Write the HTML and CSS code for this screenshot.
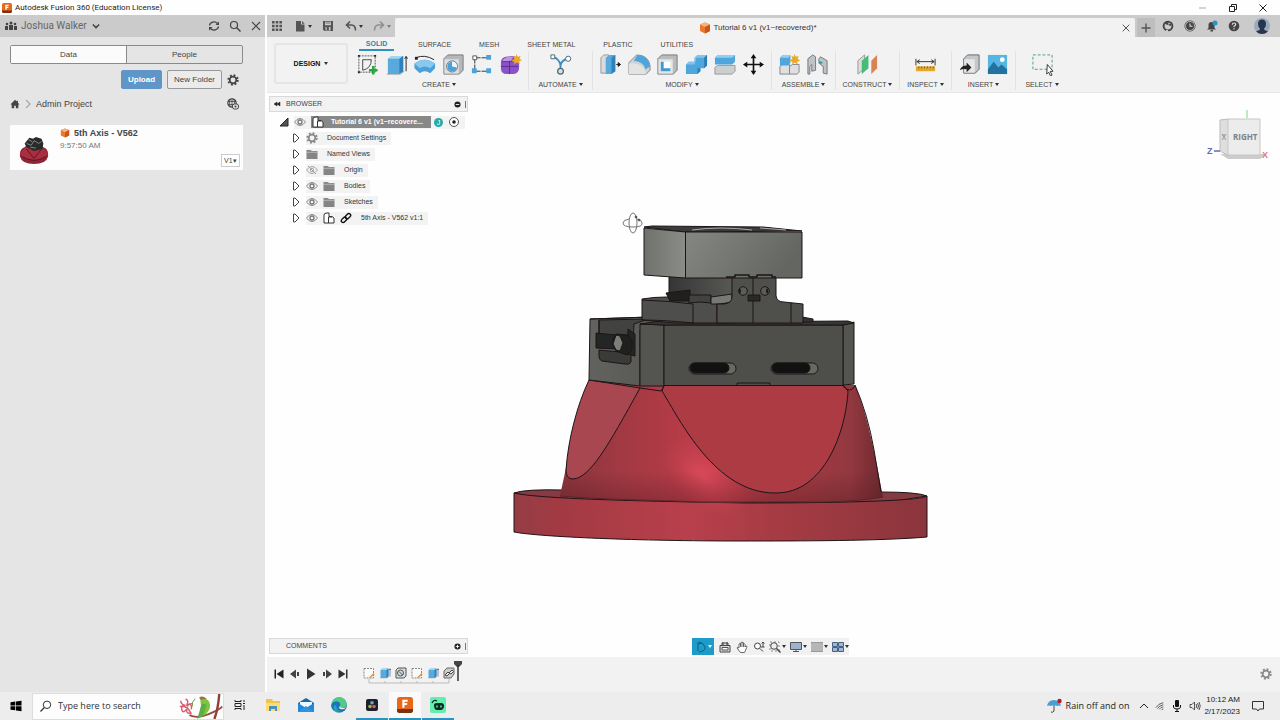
FILE: index.html
```html
<!DOCTYPE html>
<html lang="en">
<head>
<meta charset="utf-8">
<title>Autodesk Fusion 360 (Education License)</title>
<link rel="stylesheet" href="styles.css">
</head>
<body>
<svg class="sprite" aria-hidden="true">
  <defs>
    <linearGradient id="metalLeft" x1="0" x2="1"><stop offset="0" stop-color="#6f716c"/><stop offset="1" stop-color="#8b8d88"/></linearGradient>
    <linearGradient id="metalFront" x1="0" x2="1" y1="0" y2=".3"><stop offset="0" stop-color="#858882"/><stop offset="1" stop-color="#646662"/></linearGradient>
    <linearGradient id="darkLeft" x1="0" x2="1"><stop offset="0" stop-color="#62635f"/><stop offset="1" stop-color="#50514d"/></linearGradient>
    <linearGradient id="column" x1="0" x2="1"><stop offset="0" stop-color="#353535"/><stop offset="1" stop-color="#595a57"/></linearGradient>
    <linearGradient id="cone" x1="0" x2="1"><stop offset="0" stop-color="#8a343c"/><stop offset=".18" stop-color="#a03942"/><stop offset=".36" stop-color="#b33b47"/><stop offset=".47" stop-color="#c8414f"/><stop offset=".65" stop-color="#a83a43"/><stop offset=".9" stop-color="#93383f"/><stop offset="1" stop-color="#6e292f"/></linearGradient>
    <radialGradient id="shine"><stop offset="0" stop-color="#dd4b5c"/><stop offset="1" stop-color="#c8414f" stop-opacity="0"/></radialGradient>
    <linearGradient id="shade" x1="0" x2="0" y1="0" y2="1"><stop offset=".75" stop-color="#3c1216" stop-opacity="0"/><stop offset="1" stop-color="#3c1216" stop-opacity=".28"/></linearGradient>
    <linearGradient id="base" x1="0" x2="1"><stop offset="0" stop-color="#963c44"/><stop offset=".12" stop-color="#a33a43"/><stop offset=".42" stop-color="#b8404c"/><stop offset=".6" stop-color="#a93c44"/><stop offset="1" stop-color="#8a353c"/></linearGradient>
    <linearGradient id="edgeBlue" x1="0" x2="1"><stop offset="0" stop-color="#35c1b1"/><stop offset="1" stop-color="#0c59a4"/></linearGradient>
  </defs>

  <symbol id="i-fusion" viewBox="0 0 12 12"><rect width="12" height="12" rx="2" fill="#e8681a"/><path d="M0 9h12v1a2 2 0 0 1-2 2H2a2 2 0 0 1-2-2z" fill="#7c3210"/><path d="M4 8V2h4v1.500H5.600V4.500H7.600V6H5.600V8z" fill="#fff"/></symbol>
  <symbol id="i-people" viewBox="0 0 12 12"><g fill="#444"><circle cx="2" cy="4" r="1.300"/><circle cx="6" cy="3" r="1.500"/><circle cx="10" cy="4" r="1.300"/><path d="M0 6h3v4H0zM4 5h4v5H4zM9 6h3v4H9z"/></g></symbol>
  <symbol id="i-chevron" viewBox="0 0 8 8"><path d="M1.500 2.800 4 5.300 6.500 2.800" fill="none" stroke="#444" stroke-width="1.200"/></symbol>
  <symbol id="i-refresh" viewBox="0 0 12 12"><path d="M1.500 5.500A4.500 4 0 0 1 9.500 3.500M10.500 6.500A4.500 4 0 0 1 2.500 8.500" fill="none" stroke="#444" stroke-width="1.300"/><path d="M11 1.500v3.500H7.500zM1 10.500V7h3.500z" fill="#444"/></symbol>
  <symbol id="i-search" viewBox="0 0 12 12"><circle cx="5" cy="5" r="3.500" fill="none" stroke="#444" stroke-width="1.200"/><path d="m7.500 7.500 4 4" stroke="#444" stroke-width="1.400"/></symbol>
  <symbol id="i-find" viewBox="0 0 12 12"><circle cx="7" cy="4.800" r="3.700" fill="none" stroke="#333"/><path d="m4.300 7.500-3.800 4" stroke="#333" stroke-width="1.200"/></symbol>
  <symbol id="i-close" viewBox="0 0 12 12"><path d="m2 2 8 8M10 2l-8 8" stroke="#444" stroke-width="1.100"/></symbol>
  <symbol id="i-gear" viewBox="0 0 12 12"><circle cx="6" cy="6" r="4.800" fill="none" stroke="currentColor" stroke-width="1.800" stroke-dasharray="1.900 1.870"/><circle cx="6" cy="6" r="3.300" fill="none" stroke="currentColor" stroke-width="1.700"/></symbol>
  <symbol id="i-home" viewBox="0 0 12 12"><path d="M6 1 .5 6.500H2V11h3V8h2v3h3V6.500h1.500L9.500 4.500V2H8v1z" fill="#444"/></symbol>
  <symbol id="i-globe" viewBox="0 0 12 12"><circle cx="5" cy="5" r="4.200" fill="none" stroke="#444" stroke-width="1.200"/><path d="M1 3.500h8M1 6.500h8M5 1v8M3 1.500q-1 3.500 0 7M7 1.500q1 3.500 0 7" stroke="#444" stroke-width=".8" fill="none"/><rect x="5.500" y="6" width="6" height="5" rx="2" fill="#e5e5e5" stroke="#444"/><circle cx="8.500" cy="8.500" r="1" fill="#444"/></symbol>
  <symbol id="i-cube" viewBox="0 0 12 12"><path d="m6 .5 5 2V9l-5 2.500L1 9V2.500z" fill="#e77a2c"/><path d="m6 .5 5 2L6 5 1 2.500z" fill="#f7b27b"/><path d="m6 5 5-2.500V9l-5 2.500z" fill="#c9561b"/></symbol>
  <symbol id="i-thumb" viewBox="0 0 32 32"><path d="M1 20q0-5 5-7l4-4h12l4 4q5 2 5 7v3q-2 8-15 8T1 23z" fill="#8f2535"/><path d="M1 20q5 7 15 7t15-7l-6-7H7z" fill="#a82e40"/><path d="m8 15 8 10 8-10M3 23q13 8 26 0" fill="none" stroke="#541520"/><path d="m6 9 5-6 4 1 3-2 6 2 2 5-1 6-9 2-8-4z" fill="#292b2a"/><path d="m8 9 5 2 3-5 5 3 3-2M10 5l4 2m-2 6 6 1" fill="none" stroke="#878987"/></symbol>

  <symbol id="i-grid" viewBox="0 0 12 12"><path d="M1 1h2.600v2.600H1zM4.700 1h2.600v2.600H4.700zM8.400 1H11v2.600H8.400zM1 4.700h2.600v2.600H1zM4.700 4.700h2.600v2.600H4.700zM8.400 4.700H11v2.600H8.400zM1 8.400h2.600V11H1zM4.700 8.400h2.600V11H4.700zM8.400 8.400H11V11H8.400z" fill="#555"/></symbol>
  <symbol id="i-file" viewBox="0 0 12 12"><path d="M2 1h5v3.500h3.500V11.500H2z" fill="#555"/><path d="M8 1v2.700h2.700z" fill="#555"/></symbol>
  <symbol id="i-save" viewBox="0 0 12 12"><path d="M1 1h10v10H2.500L1 9.500z" fill="#555"/><path d="M3 1.800h6v3.400H3zM3.500 7h5v3.500h-5z" fill="#cbcbcb"/><path d="M3.500 3h5M5 7h1.500v3H5z" stroke="#555" stroke-width=".7" fill="#555"/></symbol>
  <symbol id="i-undo" viewBox="0 0 12 12"><path d="M2 5h4.500Q10.500 5 10.500 10.500M5 1.500 1.500 5 5 8.500" fill="none" stroke="currentColor" stroke-width="1.600"/></symbol>
  <symbol id="i-redo" viewBox="0 0 12 12"><path d="M10 5H5.500Q1.500 5 1.500 10.500M7 1.500 10.500 5 7 8.500" fill="none" stroke="currentColor" stroke-width="1.600"/></symbol>
  <symbol id="i-plus" viewBox="0 0 12 12"><path d="M6 1.500v9M1.500 6h9" stroke="#555" stroke-width="1.400"/></symbol>
  <symbol id="i-ext" viewBox="0 0 12 12"><circle cx="6" cy="6" r="4.400" fill="none" stroke="#444" stroke-width="1.900"/><path d="M4 1h3l-1 4-3-1zM6 5l3-2v3z" fill="#444"/><path d="M5 10v2" stroke="#cbcbcb" stroke-width="2"/></symbol>
  <symbol id="i-clock" viewBox="0 0 12 12"><circle cx="6" cy="6" r="5.200" fill="none" stroke="#555" stroke-width=".8"/><circle cx="6" cy="6" r="4" fill="#444"/><path d="M6 3.500V6.300h2.500" fill="none" stroke="#ddd" stroke-width="1.100"/></symbol>
  <symbol id="i-bell" viewBox="0 0 12 12"><path d="M1 9.500 2.500 8V5Q2.500 2 5.500 2T8.500 5V8L10 9.500zM4.500 10h2.500v1.500H4.500z" fill="#444"/><circle cx="9" cy="3" r="2.500" fill="#1e96c8"/></symbol>
  <symbol id="i-help" viewBox="0 0 12 12"><circle cx="6" cy="6" r="5.300" fill="#444"/><path d="M4.300 4.700Q4.300 3 6 3t1.700 1.600Q7.700 5.600 6 6.300V7.200M6 8.200v1.200" fill="none" stroke="#ddd" stroke-width="1.200"/></symbol>
  <symbol id="i-avatar" viewBox="0 0 16 16"><circle cx="8" cy="8" r="8" fill="#9ba9bf"/><path d="M8 1.500q4 0 4 4.500 0 3-2 4.500l.5 1.500 3.500 1.500Q11 16 8 16t-6-2.500L5.500 12 6 10.500Q4 9 4 6q0-4.500 4-4.500z" fill="#27364e"/></symbol>

  <symbol id="t-sketch" viewBox="0 0 24 24"><path d="M3 3h17v17H3z" fill="none" stroke="#555" stroke-dasharray="2 1"/><path d="M7 18V7l4 0M7 18q9-2 9-11h-5" fill="none" stroke="#444" stroke-width="1"/><path d="M2 2h2v2H2zM19 2h2v2h-2zM2 19h2v2H2z" fill="#222"/><path d="M18 13.500v9M13.500 18h9" stroke="#26a83e" stroke-width="2.600"/></symbol>
  <symbol id="t-extrude" viewBox="0 0 24 24"><path d="m3 6 4-3h12v16l-4 3H3z" fill="#58a9dc"/><path d="m3 6 4-3h12l-4 3z" fill="#a5d5f2"/><path d="m15 6 4-3v16l-4 3z" fill="#2e82bb"/><path d="M22 4v15M20.500 6 22 3.500 23.500 6" fill="none" stroke="#222"/><path d="M2 22h14l4-3" fill="none" stroke="#999"/></symbol>
  <symbol id="t-revolve" viewBox="0 0 24 24"><path d="M1.500 11Q12 3 23 11v5l-5 5q-6-4-11 0l-5.500-5z" fill="#4ba1d7"/><path d="M1.500 11Q12 3 23 11l-5 5q-6-4-11 0z" fill="#8bc8ed"/><path d="M3 5q9-4 19 2" fill="none" stroke="#222"/><path d="M2 4h3v3H2z" fill="#222"/></symbol>
  <symbol id="t-hole" viewBox="0 0 24 24"><path d="m2 6 4-4h16v16l-4 4H2z" fill="#b5b8bb" stroke="#76797c"/><path d="M2.500 6.500h15v15h-15z" fill="#dddfe1"/><circle cx="10.500" cy="14" r="5.800" fill="#eef6fb" stroke="#777"/><path d="M10.500 9v5l5 1a5 5 0 1 1-5-6z" fill="#4ba1d7"/></symbol>
  <symbol id="t-pattern" viewBox="0 0 24 24"><path d="M5 5h14M5 19h14M5 5v14" stroke="#333" stroke-dasharray="6 1"/><path d="M3 3h4v4H3z" fill="#fff" stroke="#555"/><path d="M17 2h5v5h-5zM2 16h5v5H2zM17 16h5v5h-5z" fill="#4aa3da"/></symbol>
  <symbol id="t-form" viewBox="0 0 24 24"><path d="M2 10q0-5 5-6l7-1q7 1 7 6v6q0 6-6 7H8q-6 0-6-6z" fill="#8a52c4"/><path d="M3 9q2-4 7-5h5l-3 5z" fill="#bd95e3"/><path d="M2 14h18M11 8v14M3 9h10l4-5" stroke="#5c2d94" fill="none"/><path d="m18 1 1.500 3 3-1-1 3 2.500 1.500-3 1 .5 3-3-1.500-2.500 2v-3l-3-1 3-2-1-3 2.500 1z" fill="#eca927"/></symbol>
  <symbol id="t-auto" viewBox="0 0 24 24"><path d="M4 4q7 2 8 9m8-7q-7 1-8 7v5" fill="none" stroke="#3e8dbd" stroke-width="2"/><path d="M2 2h4v4H2z" fill="#fff" stroke="#4a6878"/><circle cx="20" cy="6" r="2.700" fill="#fff" stroke="#4a6878"/><circle cx="12" cy="19" r="3" fill="#ddd" stroke="#4a6878" stroke-width="1.300"/></symbol>
  <symbol id="t-press" viewBox="0 0 24 24"><path d="m2 5 3-3h5v19H2z" fill="#d9dbdc" stroke="#999"/><path d="m7 5 4-3h6v17l-4 3H7z" fill="#58aadd"/><path d="m13 5 4-3v17l-4 3z" fill="#2e83bd"/><path d="M18 12h4m-2-2 2.500 2-2.500 2z" fill="#222" stroke="#222"/></symbol>
  <symbol id="t-fillet" viewBox="0 0 24 24"><path d="M1 10 9 2q12 0 14 11v5l-4 4H1z" fill="#cfd1d3" stroke="#888"/><path d="M1 11q15-2 18 11H1z" fill="#e2e3e5"/><path d="M10 2q12 1 13 12l-5 3Q17 9 6 8z" fill="#4da5db"/></symbol>
  <symbol id="t-shell" viewBox="0 0 24 24"><path d="m2 6 4-4h16v16l-4 4H2z" fill="#b9bcbe" stroke="#777"/><path d="M2.500 6.500h15v15h-15z" fill="#e3e5e6"/><path d="M5 9h10v10H5z" fill="#fff"/><path d="M5 9h3v7h7v3H5z" fill="#3f9ad2"/></symbol>
  <symbol id="t-combine" viewBox="0 0 24 24"><path d="m1 12 3-3h6V5l3-3h10v11l-3 3h-4v3l-3 3H1z" fill="#4fa6dc"/><path d="m1 12 3-3h6V5l3-3h10l-3 3h-8l-2 7z" fill="#82c4ed"/><path d="m20 5 3-3v11l-3 3zM13 16h3v3l-3 3z" fill="#2b7eb7"/></symbol>
  <symbol id="t-split" viewBox="0 0 24 24"><path d="m2 5 3-3h18v7l-3 3H2z" fill="#4fa6dc"/><path d="m2 5 3-3h18l-3 3z" fill="#94cff2"/><path d="m2 15 3-2h18v6l-3 3H2z" fill="#cccfd1" stroke="#999"/></symbol>
  <symbol id="t-move" viewBox="0 0 24 24"><path d="M12 3v18M3 12h18" stroke="#111" stroke-width="1.700"/><path d="m12 1 3 4.500H9zM12 23l3-4.500H9zM1 12l4.500-3v6zM23 12l-4.500-3v6z" fill="#111"/></symbol>
  <symbol id="t-newcomp" viewBox="0 0 24 24"><path d="m2 14 3-2h7v10H2zM12 14l3-2h7v8l-2 2h-8z" fill="#dddfe0" stroke="#888"/><path d="m2 5 3-3h8v8l-2 3H2z" fill="#4fa6dc"/><path d="m2 5 3-3h8l-2 3z" fill="#94cff2"/><path d="m17 1 1.500 3 3-1-1 3L23 8l-3 1 .5 3-3-2-2.500 2v-3l-3-1 3-2-1-3 2.500 1z" fill="#e6a928"/></symbol>
  <symbol id="t-joint" viewBox="0 0 24 24"><path d="m2 6 5-4 3 2v14l-4 1v-7l-2 2v8H2zM13 7l2-3 7 4v14l-4-1v-7l-3-2z" fill="#bfc3c6" stroke="#74797d"/><path d="M13 10h4" stroke="#2798a7" stroke-width="2"/></symbol>
  <symbol id="t-plane" viewBox="0 0 24 24"><path d="M2 8 9 2v14l-7 6z" fill="#ddd" stroke="#999"/><path d="m6 8 7-6v14l-7 6z" fill="#49bb78"/><path d="m16 8 6-6v14l-6 6z" fill="#d98352"/></symbol>
  <symbol id="t-measure" viewBox="0 0 24 24"><path d="M2 6v7M22 6v7M3 9h18M6 7 3 9l3 2M18 7l3 2-3 2" stroke="#333" fill="none"/><path d="M2 14h20v5H2z" fill="#e2a72b"/><path d="M5 14v2m3-2v2m3-2v2m3-2v2m3-2v2m3-2v2" stroke="#82570a"/></symbol>
  <symbol id="t-insert" viewBox="0 0 24 24"><path d="m6 6 4-4h12v15l-4 4H6z" fill="#c5c8ca" stroke="#666"/><path d="M6.500 6.500h11v14h-11z" fill="#e5e7e8"/><path d="M2 18q1-5 7-5v-3l5 5-5 5v-3q-4-1-7 1z" fill="#222"/></symbol>
  <symbol id="t-image" viewBox="0 0 24 24"><path d="M2 2h20v20H2z" fill="#55b5e3"/><path d="M2 17 8 9l5 6 3-3 6 5v5H2z" fill="#23719e"/><circle cx="17" cy="7" r="2.500" fill="#fff"/></symbol>
  <symbol id="t-select" viewBox="0 0 24 24"><path d="M2 2h20v15H2z" fill="none" stroke="#4e9c88" stroke-dasharray="3 2"/><path d="m17 12 6 7-3 .3 2 3.700-1.800.8-1.800-3.800-2 2z" fill="#fff" stroke="#333"/></symbol>

  <symbol id="b-eye" viewBox="0 0 12 12"><path d="M.5 6Q3 2.500 6 2.500T11.500 6Q9 9.500 6 9.500T.5 6z" fill="none" stroke="#888"/><circle cx="6" cy="6" r="2" fill="none" stroke="#777" stroke-width="1.300"/></symbol>
  <symbol id="b-hidden" viewBox="0 0 12 12"><path d="M.5 6Q3 2.500 6 2.500T11.500 6Q9 9.500 6 9.500T.5 6zM2 2l8 8" fill="none" stroke="#a2a2a2"/><circle cx="6" cy="6" r="1.700" fill="none" stroke="#aaa"/></symbol>
  <symbol id="b-folder" viewBox="0 0 12 12"><path d="M.5 2h4L6 3h5.500v8H.5z" fill="#858585"/><path d="M0 4.300h12" stroke="#ccc" stroke-width=".7"/></symbol>
  <symbol id="b-comp" viewBox="0 0 12 12"><path d="M1 3q0-2 3-2h2v3.500h3l2 1.500v5H1z" fill="#fff" stroke="#333"/><path d="M5.500 11V5H9" fill="none" stroke="#333"/></symbol>
  <symbol id="b-link" viewBox="0 0 12 12"><g fill="none" stroke="#111" stroke-width="1.400"><rect x="1" y="6" width="6" height="3.600" rx="1.800" transform="rotate(-45 4 7.800)"/><rect x="5" y="2.400" width="6" height="3.600" rx="1.800" transform="rotate(-45 8 4.200)"/></g></symbol>
  <symbol id="b-tri" viewBox="0 0 8 10"><path d="M1.500 1v8h1.500L7 5 3 1z" fill="#fff" stroke="#444"/></symbol>
  <symbol id="b-open" viewBox="0 0 10 10"><path d="M1 9h8V1z" fill="#555" stroke="#222"/></symbol>
  <symbol id="b-radio" viewBox="0 0 12 12"><circle cx="6" cy="6" r="4.500" fill="#fff" stroke="#555"/><circle cx="6" cy="6" r="1.800" fill="#222"/></symbol>
  <symbol id="b-minus" viewBox="0 0 8 8"><circle cx="4" cy="4" r="3.500" fill="#222"/><path d="M2 4h4" stroke="#fff"/></symbol>
  <symbol id="b-plus" viewBox="0 0 8 8"><circle cx="4" cy="4" r="3.500" fill="#222"/><path d="M2 4h4M4 2v4" stroke="#fff"/></symbol>
  <symbol id="b-back" viewBox="0 0 10 8"><path d="M5 2v4L2 4zM8 2v4L5 4z" fill="#222" stroke="#222" stroke-width=".5"/></symbol>

  <symbol id="n-orbit" viewBox="0 0 12 12"><path d="M4 1q5 1 6 5t-6 5M3 3l4-1M3 1v9" fill="none" stroke="#135e84"/></symbol>
  <symbol id="n-look" viewBox="0 0 12 12"><path d="M1 4.500h10V11H1zM3 4.500V2h6v2.500M4 1v3M8 1v3" fill="#ddd" stroke="#444"/><path d="M3 6.500h6v2.500H3z" fill="#fff" stroke="#555"/></symbol>
  <symbol id="n-pan" viewBox="0 0 12 12"><path d="M3 7V3q1-1 1.500 0V2Q5.500.5 6 2V1.500q1-1 1.500.5v1q1-1 1.500.5V6l1-1q1.500 0 .7 1.500L9 10.500 8.500 11.500H4.500L1 7q0-1.500 2 0zM4.500 3v3M6 2v4M7.500 3v3" fill="#fff" stroke="#444" stroke-width=".8"/></symbol>
  <symbol id="n-zoom" viewBox="0 0 12 12"><circle cx="4.500" cy="5" r="3" fill="#fff" stroke="#444"/><path d="m7 7.500 3 3M10 1v5M8.500 2.500 10 1l1.500 1.500M8 6h3.500" fill="none" stroke="#444"/></symbol>
  <symbol id="n-fit" viewBox="0 0 12 12"><path d="M1 1h9v9H1z" fill="none" stroke="#888" stroke-dasharray="2"/><circle cx="5" cy="5" r="3.300" fill="#eee" stroke="#444"/><path d="m7.500 7.500 4 4" stroke="#444" stroke-width="1.500"/></symbol>
  <symbol id="n-display" viewBox="0 0 12 12"><path d="M.5 1.500h11v7H.5z" fill="#9cb2cf" stroke="#555"/><path d="M3 10.500h6M6 8v3" stroke="#555"/></symbol>
  <symbol id="n-grid" viewBox="0 0 12 12"><path d="M0 1h12v10H0z" fill="#999"/><path d="M0 3h12M0 5h12M0 7h12M0 9h12" stroke="#eee" stroke-width=".7"/></symbol>
  <symbol id="n-views" viewBox="0 0 12 12"><path d="M.5 1.500h5v4h-5zM6.500 1.500h5v4h-5zM.5 6.500h5v4h-5zM6.500 6.500h5v4h-5z" fill="#9eb9d8" stroke="#47617f"/></symbol>

  <symbol id="p-first" viewBox="0 0 12 12"><path d="M1.500 1.500H3v9H1.500zM10.500 1.500v9L3.500 6z" fill="#222"/></symbol>
  <symbol id="p-prev" viewBox="0 0 12 12"><path d="M7 1.500v9L1 6zM8 4h2v4H8z" fill="#444"/></symbol>
  <symbol id="p-play" viewBox="0 0 12 12"><path d="M2 .5v11L10.500 6z" fill="#333"/></symbol>
  <symbol id="p-next" viewBox="0 0 12 12"><path d="M5 1.500v9L11 6zM2 4h2v4H2z" fill="#444"/></symbol>
  <symbol id="p-last" viewBox="0 0 12 12"><path d="M10.500 1.500H9v9h1.500zM1.500 1.500v9L8.500 6z" fill="#333"/></symbol>
  <symbol id="h-sketch" viewBox="0 0 12 12"><path d="M1 1.500h9.500V11H1z" fill="#fafafa" stroke="#888" stroke-dasharray="2 1"/><path d="M6 10.500 10.500 6l1 1.200L7.500 11z" fill="#dc9444"/></symbol>
  <symbol id="h-hole" viewBox="0 0 12 12"><path d="m1 3 2-2h8v8l-2 2H1z" fill="#ddd" stroke="#555"/><circle cx="5.500" cy="6" r="3" fill="#cfdae3" stroke="#555"/><path d="M4 4.500 7.500 8" stroke="#456"/></symbol>
  <symbol id="h-link" viewBox="0 0 12 12"><path d="m1 4 3-3h7v6l-3 4H1z" fill="#ccc" stroke="#666"/><path d="m2 8 3-3 1.500 1.500L4 9zm4-2 3-3 1.500 1.500L8 7z" fill="#eee" stroke="#444"/></symbol>

  <symbol id="w-start" viewBox="0 0 12 12"><path d="m.5 2.300 4.800-.7v4H.5zM6 1.500l5.500-.8v4.900H6zM.5 6.300h4.800v4L.5 9.700zM6 6.300h5.500v5L6 10.500z" fill="#000"/></symbol>
  <symbol id="w-bird" viewBox="0 0 46 26"><path d="M12 22q8 4 20-1t14-8" fill="none" stroke="#9c4a3d" stroke-width="2"/><path d="M43 0q-1 15-5 26" stroke="#8d4138" stroke-width="2.500" fill="none"/><path d="M3 7q0 4 5 5-5-1-4 4t5 0q0 6 5 3M8 5q4 2 1 7 6-4 5 4M2 13q8-2 12 8" fill="none" stroke="#dc5a72" stroke-width="1.500"/><path d="M18 5q-4 3-3 8M15 10q-4-1-5 4" stroke="#6f923a" fill="none"/><path d="M23 4q8 0 10 5 2 6-4 12l-7 4 2-13z" fill="#7dc53a"/><path d="m25 10 5 1-4 12-6 3z" fill="#5aae46"/><path d="M22 4q3-3 8 1l-6 1z" fill="#9d7340"/></symbol>
  <symbol id="w-task" viewBox="0 0 12 12"><path d="M1 4.500h6v3H1zM1 1v1.500h6V1M1 11V9.500h6V11M10 1v2M10 6v5M9 4.500h2" fill="none" stroke="#222"/></symbol>
  <symbol id="w-explorer" viewBox="0 0 16 16"><path d="M1 2h6l1 2h7v10H1z" fill="#f2c44d"/><path d="M1 6h14v8H1z" fill="#fbdc77"/><path d="M4 9h8v5h-2v-2H6v2H4z" fill="#4a90c7"/></symbol>
  <symbol id="w-mail" viewBox="0 0 16 16"><path d="m0 6 8-5 8 5v9H0z" fill="#1469ae"/><path d="M2 5h12v6H2z" fill="#eef7fd"/><path d="m0 6 8 5 8-5v9H0z" fill="#2387d6"/><path d="m0 15 8-6 8 6z" fill="#2f93dd"/></symbol>
  <symbol id="w-edge" viewBox="0 0 16 16"><circle cx="8" cy="8" r="7.800" fill="url(#edgeBlue)"/><path d="M1 6q2-6 8-5.800 6 .8 6.800 7Q16 10 12 11q-4 0-3-2 1-4-3-4.500Q3 4 1 6z" fill="#54ca86"/><path d="M.3 8Q2 4 6 4.500q4 .5 3 4.500-1 2 3 2 2 0 3.500-1-.5 3-4 4Q5 13 5 8 1 8 4 14 0 12 .3 8z" fill="#1873c3"/><path d="M9 9q0 2 3 2 2 0 3.500-1-2 3-6 2-2.500-1-.5-3z" fill="#eee"/></symbol>
  <symbol id="w-davinci" viewBox="0 0 12 12"><rect width="12" height="12" rx="2" fill="#1d2129"/><circle cx="6" cy="3.800" r="1.800" fill="#65a9d4"/><circle cx="4" cy="7.500" r="1.800" fill="#9ab54c"/><circle cx="8" cy="7.500" r="1.800" fill="#d35b53"/></symbol>
  <symbol id="w-green" viewBox="0 0 16 16"><rect width="16" height="16" rx="2" fill="#63edaf"/><path d="M4 8q0-2 3-2h4q3 0 3 3t-3 4H7q-3 0-3-5z" fill="#092b21"/><path d="M2 6q2-4 5-2" fill="none" stroke="#092b21" stroke-width="1.300"/><path d="M7 8.500v2M11 8.500v2" stroke="#63edaf" stroke-width="1.500"/></symbol>
  <symbol id="w-rain" viewBox="0 0 16 16"><path d="M1 8q1-6 7-6t7 6q-2-1-3.500 0Q9.500 7 8 8 6 7 4.500 8 3 7 1 8z" fill="#479fd4"/><path d="M8 8v5q-1 2-3 1" fill="none" stroke="#444"/><circle cx="13.500" cy="3" r="2.200" fill="#b71928"/></symbol>
  <symbol id="w-up" viewBox="0 0 10 10"><path d="m1 7 4-4 4 4" fill="none" stroke="#222"/></symbol>
  <symbol id="w-wifi" viewBox="0 0 12 12"><path d="M1 8Q4 3 10 2M3 9Q5 5.500 10 4.500M5 10q1.500-2.500 5-3M7.500 11q.5-1 2.500-1.500" fill="none" stroke="#444"/></symbol>
  <symbol id="w-mic" viewBox="0 0 12 12"><rect x="4" y="0" width="4" height="7" rx="1" fill="#111"/><path d="M2.500 5v2q0 2 3.500 2t3.500-2V5M6 9v2.500M4 11.500h4" fill="none" stroke="#111"/></symbol>
  <symbol id="w-sound" viewBox="0 0 12 12"><path d="M1 4.500h2L5.500 2v8L3 7.500H1zM7 4q1.500 2 0 4M8.500 3q2 3 0 6M10 2q2.500 4 0 8" fill="none" stroke="#444" stroke-width=".9"/></symbol>
  <symbol id="w-note" viewBox="0 0 12 12"><path d="M.5 1.500h11v7.500H7.500L6 11 4.500 9h-4z" fill="none" stroke="#333"/></symbol>
</svg>

<header class="titlebar">
  <svg class="icon icon-s"><use href="#i-fusion"/></svg>
  <h1 class="titlebar-name">Autodesk Fusion 360 (Education License)</h1>
  <div class="window-controls">
    <button aria-label="Minimize"><svg viewBox="0 0 10 10"><path d="M1 5h7" stroke="#aaa"/></svg></button>
    <button aria-label="Restore"><svg viewBox="0 0 10 10"><path d="M1.500 3.500h5v5h-5zM3.500 3V1.500h5v5H7" fill="none" stroke="#222"/></svg></button>
    <button aria-label="Close"><svg viewBox="0 0 10 10"><path d="m1.500 1.500 7 7M8.500 1.500l-7 7" stroke="#222"/></svg></button>
  </div>
</header>

<div class="app">
  <aside class="data-panel">
    <div class="panel-head">
      <svg class="icon icon-m"><use href="#i-people"/></svg>
      <button class="team">Joshua Walker <svg class="icon icon-s"><use href="#i-chevron"/></svg></button>
      <div class="panel-tools">
        <button aria-label="Refresh"><svg class="icon icon-m"><use href="#i-refresh"/></svg></button>
        <button aria-label="Search"><svg class="icon icon-m"><use href="#i-search"/></svg></button>
        <button aria-label="Close panel"><svg class="icon icon-m"><use href="#i-close"/></svg></button>
      </div>
    </div>
    <div class="panel-body">
      <div class="segmented"><button class="selected">Data</button><button>People</button></div>
      <div class="panel-actions">
        <button class="btn btn-primary">Upload</button><button class="btn">New Folder</button>
        <button aria-label="Settings"><svg class="icon icon-m"><use href="#i-gear"/></svg></button>
      </div>
      <nav class="crumbs">
        <a href="#" aria-label="Home"><svg class="icon icon-s"><use href="#i-home"/></svg></a>
        <svg class="crumb-arrow" viewBox="0 0 6 10"><path d="m1 1 4 4-4 4" fill="none" stroke="#aaa" stroke-width="1.300"/></svg>
        <a href="#">Admin Project</a>
        <button class="push" aria-label="Open on the web"><svg class="icon icon-m"><use href="#i-globe"/></svg></button>
      </nav>
      <article class="file-card">
        <svg class="thumb"><use href="#i-thumb"/></svg>
        <div class="file-info">
          <h2><svg class="icon icon-s"><use href="#i-cube"/></svg>5th Axis - V562</h2>
          <p>9:57:50 AM</p>
        </div>
        <select class="version" aria-label="Version"><option>V1▾</option></select>
      </article>
    </div>
  </aside>

  <main class="workspace">
    <div class="tab-row">
      <div class="quick">
        <button aria-label="Show data panel"><svg class="icon icon-m"><use href="#i-grid"/></svg></button>
        <button aria-label="File"><svg class="icon icon-m"><use href="#i-file"/></svg><i class="caret"></i></button>
        <button aria-label="Save"><svg class="icon icon-m"><use href="#i-save"/></svg></button>
        <button aria-label="Undo"><svg class="icon icon-m"><use href="#i-undo"/></svg><i class="caret"></i></button>
        <button class="faded" aria-label="Redo"><svg class="icon icon-m"><use href="#i-redo"/></svg><i class="caret"></i></button>
      </div>
      <div class="doc-tab">
        <span class="doc-name"><svg class="icon icon-m"><use href="#i-cube"/></svg>Tutorial 6 v1 (v1~recovered)*</span>
        <button aria-label="Close document"><svg class="icon icon-s"><use href="#i-close"/></svg></button>
      </div>
      <button class="new-tab" aria-label="New design"><svg class="icon icon-m"><use href="#i-plus"/></svg></button>
      <div class="status-tools">
        <button aria-label="Extensions"><svg class="icon icon-m"><use href="#i-ext"/></svg></button>
        <button aria-label="Job status"><svg class="icon icon-m"><use href="#i-clock"/></svg></button>
        <button aria-label="Notifications"><svg class="icon icon-m"><use href="#i-bell"/></svg></button>
        <button aria-label="Help"><svg class="icon icon-m"><use href="#i-help"/></svg></button>
        <button class="account" aria-label="Account"><svg class="icon icon-l"><use href="#i-avatar"/></svg></button>
      </div>
    </div>

    <div class="ribbon">
      <button class="design">DESIGN <i class="caret"></i></button>
      <div class="ribbon-main">
        <div class="ribbon-tabs">
          <button class="active">SOLID</button><button>SURFACE</button><button>MESH</button><button>SHEET METAL</button><button>PLASTIC</button><button>UTILITIES</button>
        </div>
        <div class="groups">
          <section class="group six">
            <div class="tools">
              <button aria-label="Create Sketch"><svg><use href="#t-sketch"/></svg></button><button aria-label="Extrude"><svg><use href="#t-extrude"/></svg></button><button aria-label="Revolve"><svg><use href="#t-revolve"/></svg></button><button aria-label="Hole"><svg><use href="#t-hole"/></svg></button><button aria-label="Pattern"><svg><use href="#t-pattern"/></svg></button><button aria-label="Create Form"><svg><use href="#t-form"/></svg></button>
            </div><button class="group-name">CREATE <i class="caret"></i></button>
          </section>
          <section class="group two">
            <div class="tools single"><button aria-label="Automate"><svg><use href="#t-auto"/></svg></button></div><button class="group-name">AUTOMATE <i class="caret"></i></button>
          </section>
          <section class="group six">
            <div class="tools">
              <button aria-label="Press Pull"><svg><use href="#t-press"/></svg></button><button aria-label="Fillet"><svg><use href="#t-fillet"/></svg></button><button aria-label="Shell"><svg><use href="#t-shell"/></svg></button><button aria-label="Combine"><svg><use href="#t-combine"/></svg></button><button aria-label="Split Body"><svg><use href="#t-split"/></svg></button><button aria-label="Move"><svg><use href="#t-move"/></svg></button>
            </div><button class="group-name">MODIFY <i class="caret"></i></button>
          </section>
          <section class="group two">
            <div class="tools"><button aria-label="New Component"><svg><use href="#t-newcomp"/></svg></button><button aria-label="Joint"><svg><use href="#t-joint"/></svg></button></div><button class="group-name">ASSEMBLE <i class="caret"></i></button>
          </section>
          <section class="group two">
            <div class="tools single"><button aria-label="Offset Plane"><svg><use href="#t-plane"/></svg></button></div><button class="group-name">CONSTRUCT <i class="caret"></i></button>
          </section>
          <section class="group one">
            <div class="tools single"><button aria-label="Measure"><svg><use href="#t-measure"/></svg></button></div><button class="group-name">INSPECT <i class="caret"></i></button>
          </section>
          <section class="group two">
            <div class="tools"><button aria-label="Insert Derive"><svg><use href="#t-insert"/></svg></button><button aria-label="Canvas"><svg><use href="#t-image"/></svg></button></div><button class="group-name">INSERT <i class="caret"></i></button>
          </section>
          <section class="group one">
            <div class="tools single"><button aria-label="Select"><svg><use href="#t-select"/></svg></button></div><button class="group-name">SELECT <i class="caret"></i></button>
          </section>
        </div>
      </div>
    </div>

    <div class="canvas">
      <svg class="model" viewBox="267 93 1013 564" role="img" aria-label="5th axis vise model">
        <g stroke="#1d1517" stroke-width="1" stroke-linejoin="round">
          <path d="M514 493Q525 489 563 490L881 492Q918 492 927 496L883 503H560z" fill="#863a42"/>
          <path d="M514 493C540 499 640 501 740 503C840 503 920 501 927 496V537C880 541 800 541 740 541C640 541 540 537 514 532z" fill="url(#base)"/>
          <path d="M768 502h30" stroke-width="2"/>
          <path d="M589 380C575 415 569 456 560 496C610 500 650 500 703 502H820Q865 501 883 497C876 460 868 415 855 385z" fill="url(#cone)" stroke="none"/>
          <ellipse cx="705" cy="478" rx="52" ry="28" fill="url(#shine)" stroke="none" transform="rotate(40 705 478)"/>
          <path d="M589 380C575 415 569 456 560 496C610 500 650 500 703 502H820Q865 501 883 497C876 460 868 415 855 385z" fill="url(#shade)" stroke="none"/>
          <path d="M560 496C610 500 650 500 703 502H820Q865 501 883 497" fill="none" stroke="#5c252b"/>
          <path d="M589 380C577 405 568 440 566 470Q566 479 573 479C590 478 608 446 640 388z" fill="#a94750"/>
          <path d="M662 391C680 420 715 493 775 493C825 494 846 430 848 391L843 385H664z" fill="#ac3b44"/>
          <path d="M855 385Q868 415 874 450L881 492M640 388 661 391 664 386M843 386Q850 394 855 386" fill="none"/>

          <path d="M590 319 650 317 704 323 640 330V386L589 380z" fill="url(#darkLeft)"/>
          <path d="M599 320 648 319 634 324 633 344 599 340z" fill="#424341"/>
          <path d="M590 319 650 317M599 320V334"/>
          <path d="M599 350 631 353V362Q630 365 625 364L602 361Q599 360 599 356z" fill="#3a3b39"/>
          <path d="M596 333 616 335V349L596 348zM628 329 635 334V356L627 354z" fill="#242525"/>
          <path d="m616 334 12 1 4 5v10l-5 5-11-4-3-6v-6z" fill="#20211f"/>
          <path d="m616 335 4 1 3 7-3 8-4-1-3-6z" fill="#7c7e79"/>
          <path d="M640 324 664 325V386L640 386zM843 325 854 322V384L843 385z" fill="#545550"/>
          <path d="M664 325H843V385.500H664z" fill="#4e4f4a"/>
          <path d="M640 324Q665 319 704 322L848 321 854 323 843 325H664z" fill="#363735"/>
          <path d="M737 385v-2h33v2" fill="none"/>
          <rect x="689" y="363" width="47" height="11" rx="5.500" fill="#686963"/><rect x="690" y="363" width="39" height="10" rx="5" fill="#111"/>
          <rect x="771" y="363" width="47" height="11" rx="5.500" fill="#686963"/><rect x="772" y="363" width="38" height="10" rx="5" fill="#111"/>

          <path d="M642 299Q665 295 693 299L735 301V323H675L642 320z" fill="#4e4f4c"/>
          <path d="M642 300Q670 301 693 304V324M642 320Q665 320 693 323M717 304v19" fill="none"/>
          <path d="M669 276H735V299H669z" fill="url(#column)"/>
          <path d="M666 293 690 290V301H670z" fill="#20211f"/>
          <path d="M689 295H711V303Q700 301 689 303z" fill="#424340"/><path d="M711 297 732 294V302L720 304H711z" fill="#777974"/>
          <path d="M802 317 813 319V322H802z" fill="#333"/>
          <path d="M732 277H776V296Q777 302 784 302L803 304V323H717V304H724Q732 303 732 297z" fill="#4f504c"/>
          <path d="M753 277v46M791 303v20" fill="none"/>
          <circle cx="743" cy="291" r="4.300" fill="#5c5d59"/><circle cx="765" cy="291" r="4.300" fill="#5c5d59"/>
          <path d="M740 288a4 4 0 0 0 0 6q2-3 0-6zM767 288a4 4 0 0 1 0 6q-2-3 0-6z" fill="#1d1d1d" stroke="none"/>
          <path d="M748 295h12v6h-12z" fill="#292a28"/>

          <path d="M644 227 652 226 763 227 802 231 685 232z" fill="#3b3c3a"/>
          <path d="M692 230Q720 226 752 230M760 228l26 2" fill="none" stroke="#aaa"/>
          <path d="M644 228 685.500 232V278L644 275z" fill="url(#metalLeft)"/>
          <path d="M685.500 232H802V278H685.500z" fill="url(#metalFront)"/>
          <path d="M726 277h9v-2h14v2h8v-2h15v2h4" fill="none" stroke-width="1.500"/>
        </g>
        <g fill="none" stroke="#666" stroke-width=".9"><ellipse cx="633" cy="223" rx="4" ry="10"/><path d="M629 219q-6 1-6 4 0 4 10 4t9-4q0-3-5-4"/><circle cx="636" cy="217" r="1" fill="#111"/><circle cx="639" cy="220" r="1" fill="#111"/></g>
      </svg>

      <section class="browser">
        <div class="float-head"><svg class="icon icon-s"><use href="#b-back"/></svg><h2>BROWSER</h2><button aria-label="Collapse browser"><svg class="icon icon-xs"><use href="#b-minus"/></svg></button><i class="grip"></i></div>
        <ul class="tree">
          <li class="root"><svg class="icon icon-s"><use href="#b-open"/></svg><div class="node"><svg class="icon icon-m"><use href="#b-eye"/></svg><span class="root-name"><svg class="icon icon-m"><use href="#b-comp"/></svg><b>Tutorial 6 v1 (v1~recovere...</b></span><span class="user-dot">J</span><svg class="icon icon-m"><use href="#b-radio"/></svg></div></li>
          <li><svg class="icon icon-s"><use href="#b-tri"/></svg><div class="node"><svg class="icon icon-m gray"><use href="#i-gear"/></svg><span>Document Settings</span></div></li>
          <li><svg class="icon icon-s"><use href="#b-tri"/></svg><div class="node"><svg class="icon icon-m"><use href="#b-folder"/></svg><span>Named Views</span></div></li>
          <li><svg class="icon icon-s"><use href="#b-tri"/></svg><div class="node"><svg class="icon icon-m"><use href="#b-hidden"/></svg><svg class="icon icon-m"><use href="#b-folder"/></svg><span>Origin</span></div></li>
          <li><svg class="icon icon-s"><use href="#b-tri"/></svg><div class="node"><svg class="icon icon-m"><use href="#b-eye"/></svg><svg class="icon icon-m"><use href="#b-folder"/></svg><span>Bodies</span></div></li>
          <li><svg class="icon icon-s"><use href="#b-tri"/></svg><div class="node"><svg class="icon icon-m"><use href="#b-eye"/></svg><svg class="icon icon-m"><use href="#b-folder"/></svg><span>Sketches</span></div></li>
          <li><svg class="icon icon-s"><use href="#b-tri"/></svg><div class="node"><svg class="icon icon-m"><use href="#b-eye"/></svg><svg class="icon icon-m"><use href="#b-comp"/></svg><svg class="icon icon-m"><use href="#b-link"/></svg><span>5th Axis - V562 v1:1</span></div></li>
        </ul>
      </section>

      <svg class="viewcube" viewBox="0 0 66 56" role="img" aria-label="View cube">
        <path d="M14 47 22 52 54 52 60 47z" fill="#ccc"/>
        <path d="m14 13 9-1v37l-9-5z" fill="#dedede" stroke="#bbb"/><path d="M22 12h32v36H22z" fill="#ececec" stroke="#c6c6c6"/>
        <path d="m16 27 4 6m0-6-4 6m0-5h3" stroke="#999" fill="none"/>
        <path d="M41 3v8" stroke="#b8edbf" stroke-width="2"/><path d="M8 44h6" stroke="#6669b5" stroke-width="1.500"/>
        <text x="27" y="33" class="cube-face">RIGHT</text><text x="1" y="47" class="axis-z">Z</text><text x="56" y="51" class="axis-x">X</text>
      </svg>

      <section class="comments"><div class="float-head"><h2>COMMENTS</h2><button aria-label="Add comment"><svg class="icon icon-xs"><use href="#b-plus"/></svg></button><i class="grip"></i></div></section>

      <div class="navbar">
        <button class="on" aria-label="Orbit"><svg class="icon icon-m"><use href="#n-orbit"/></svg><i class="caret"></i></button>
        <button aria-label="Look At"><svg class="icon icon-m"><use href="#n-look"/></svg></button>
        <button aria-label="Pan"><svg class="icon icon-m"><use href="#n-pan"/></svg></button>
        <button aria-label="Zoom"><svg class="icon icon-m"><use href="#n-zoom"/></svg></button>
        <button aria-label="Fit"><svg class="icon icon-m"><use href="#n-fit"/></svg><i class="caret"></i></button>
        <button aria-label="Display Settings"><svg class="icon icon-m"><use href="#n-display"/></svg><i class="caret"></i></button>
        <button aria-label="Grid and Snaps"><svg class="icon icon-m"><use href="#n-grid"/></svg><i class="caret"></i></button>
        <button aria-label="Viewports"><svg class="icon icon-m"><use href="#n-views"/></svg><i class="caret"></i></button>
      </div>
    </div>

    <footer class="timeline">
      <div class="playback">
        <button aria-label="Go to start"><svg class="icon icon-m"><use href="#p-first"/></svg></button><button aria-label="Step back"><svg class="icon icon-m"><use href="#p-prev"/></svg></button><button aria-label="Play"><svg class="icon icon-m"><use href="#p-play"/></svg></button><button aria-label="Step forward"><svg class="icon icon-m"><use href="#p-next"/></svg></button><button aria-label="Go to end"><svg class="icon icon-m"><use href="#p-last"/></svg></button>
      </div>
      <div class="history">
        <div class="features">
          <button aria-label="Sketch 1"><svg class="icon icon-m"><use href="#h-sketch"/></svg></button><button aria-label="Extrude 1"><svg class="icon icon-m"><use href="#t-extrude"/></svg></button><button aria-label="Hole 1"><svg class="icon icon-m"><use href="#h-hole"/></svg></button><button aria-label="Sketch 2"><svg class="icon icon-m"><use href="#h-sketch"/></svg></button><button aria-label="Extrude 2"><svg class="icon icon-m"><use href="#t-extrude"/></svg></button><button aria-label="Linked part"><svg class="icon icon-m"><use href="#h-link"/></svg></button>
        </div>
        <svg class="rail" viewBox="0 0 92 5"><path d="M6 0v4h80V0M22 2v2M38 2v2M54 2v2M70 2v2" fill="none" stroke="#bbb"/></svg>
        <svg class="marker" viewBox="0 0 10 22"><path d="M1 1h8v3L6 7H4L1 4z" fill="#444"/><path d="M5 5v16" stroke="#333" stroke-width="1.500"/></svg>
      </div>
      <button class="push gray" aria-label="Timeline settings"><svg class="icon icon-m"><use href="#i-gear"/></svg></button>
    </footer>
  </main>
</div>

<footer class="taskbar">
  <button class="start" aria-label="Start"><svg class="icon icon-m"><use href="#w-start"/></svg></button>
  <label class="search"><svg class="icon icon-m"><use href="#i-find"/></svg><input type="text" placeholder="Type here to search" aria-label="Type here to search"><svg class="bird"><use href="#w-bird"/></svg></label>
  <div class="pinned">
    <button aria-label="Task View"><svg class="icon icon-m"><use href="#w-task"/></svg></button>
    <button aria-label="File Explorer"><svg class="icon icon-l"><use href="#w-explorer"/></svg></button>
    <button aria-label="Mail"><svg class="icon icon-l"><use href="#w-mail"/></svg></button>
    <button aria-label="Edge"><svg class="icon icon-l"><use href="#w-edge"/></svg></button>
    <button class="running" aria-label="DaVinci Resolve"><svg class="icon icon-m"><use href="#w-davinci"/></svg></button>
    <button class="running front" aria-label="Fusion 360"><svg class="icon icon-l"><use href="#i-fusion"/></svg></button>
    <button class="running" aria-label="Streamlabs"><svg class="icon icon-l"><use href="#w-green"/></svg></button>
  </div>
  <div class="tray">
    <button class="weather"><svg class="icon icon-l"><use href="#w-rain"/></svg>Rain off and on</button>
    <button aria-label="Hidden icons"><svg class="icon icon-s"><use href="#w-up"/></svg></button>
    <button aria-label="Network"><svg class="icon icon-s"><use href="#w-wifi"/></svg></button>
    <button aria-label="Microphone"><svg class="icon icon-m"><use href="#w-mic"/></svg></button>
    <button aria-label="Volume"><svg class="icon icon-m"><use href="#w-sound"/></svg></button>
    <time class="clock"><span>10:12 AM</span><span>2/17/2023</span></time>
    <button aria-label="Action center"><svg class="icon icon-m"><use href="#w-note"/></svg></button>
  </div>
</footer>
</body>
</html>
```
FILE: styles.css
```css
* { box-sizing: border-box; }
body {
  margin: 0;
  height: 100vh;
  display: flex;
  flex-direction: column;
  overflow: hidden;
  font: 8px/12px "Liberation Sans", Arial, sans-serif;
  color: #444;
  background: #fefefe;
}
h1, h2, p, ul { margin: 0; padding: 0; font-size: inherit; font-weight: normal; }
ul { list-style: none; }
a { color: inherit; text-decoration: none; display: flex; }
button, input, select { font: inherit; color: inherit; }
button {
  display: flex;
  align-items: center;
  justify-content: center;
  padding: 0;
  border: 0;
  background: none;
}
.sprite { position: absolute; width: 0; height: 0; }
.icon { flex: none; display: block; }
.icon-xs { width: 7px; height: 7px; }
.icon-s { width: 10px; height: 10px; }
.icon-m { width: 12px; height: 12px; }
.icon-l { width: 16px; height: 16px; }
.push { margin-left: auto; }
.gray { color: #888; }
.caret {
  flex: none;
  margin-left: 2px;
  border: 2px solid transparent;
  border-top: 3px solid #333;
  border-bottom: 0;
}

.titlebar { height: 15px; flex: none; display: flex; align-items: center; gap: 3px; padding: 0 12px 0 2px; color: #222; }
.titlebar-name { font-family: Roboto, sans-serif; font-size: 8px; }
.window-controls { margin-left: auto; display: flex; gap: 20px; }
.window-controls svg { width: 10px; height: 10px; }

.app { flex: 1; min-height: 0; display: flex; gap: 2px; }

.data-panel { width: 265px; flex: none; background: #e5e5e5; }
.panel-head { height: 22px; display: flex; align-items: center; gap: 4px; padding: 0 3px 0 5px; background: #cbcbcb; }
.team { gap: 4px; font-family: Roboto, sans-serif; font-size: 10px; color: #666; }
.panel-tools { margin-left: auto; display: flex; gap: 9px; }
.panel-body { padding: 8px 22px 0 10px; }
.segmented { display: flex; height: 19px; border: 1px solid #8a8a8a; border-radius: 2px; }
.segmented button { flex: 1; }
.segmented .selected { background: #fbfbfb; border-right: 1px solid #8a8a8a; }
.panel-actions { display: flex; justify-content: flex-end; gap: 5px; margin-top: 6px; padding-right: 4px; }
.btn { height: 19px; padding: 0 6px; border: 1px solid #999; border-radius: 2px; background: #ebebeb; }
.btn-primary { border-color: #6095c8; background: #6095c8; color: #fff; font-weight: bold; }
.crumbs { display: flex; align-items: center; gap: 5px; height: 12px; margin-top: 9px; padding-right: 4px; font-size: 9px; }
.crumb-arrow { width: 6px; height: 10px; }
.file-card { display: flex; height: 45px; margin-top: 15px; padding: 2px 3px 3px 9px; background: #fdfdfd; }
.thumb { width: 30px; height: 34px; margin-top: 6px; }
.file-info { padding-left: 11px; }
.file-info h2 { display: flex; align-items: center; gap: 4px; height: 12px; font-size: 9px; font-weight: bold; }
.file-info p { line-height: 14px; color: #777; }
.version { align-self: flex-end; margin-left: auto; height: 13px; width: 19px; padding: 0 2px; appearance: none; border: 1px solid #ccc; background: #fff; font-size: 7px; }

.workspace { flex: 1; min-width: 0; display: flex; flex-direction: column; }
.tab-row { height: 22px; flex: none; display: flex; align-items: center; background: #cbcbcb; color: #555; }
.quick { width: 128px; display: flex; align-items: center; justify-content: space-between; padding: 0 4px; }
.faded { opacity: .5; }
.doc-tab { flex: 1; align-self: stretch; display: flex; align-items: center; margin-top: 3px; padding-right: 4px; background: #f2f2f2; border-radius: 2px 2px 0 0; color: #333; }
.doc-name { flex: 1; display: flex; align-items: center; justify-content: center; gap: 2px; }
.new-tab { width: 18px; align-self: stretch; margin: 3px 0 0 2px; background: #bebebe; }
.status-tools { display: flex; align-items: center; gap: 10px; padding: 0 10px 0 7px; }
.account { margin-left: 4px; }

.ribbon { flex: none; display: flex; gap: 2px; height: 56px; padding: 0 7px; background: #f2f2f2; border-bottom: 1px solid #e8e8e8; font-size: 7px; line-height: 9px; }
.design { width: 74px; height: 41px; margin-top: 6px; border: 2px solid #e5e5e5; border-radius: 3px; color: #111; font-weight: bold; gap: 2px; }
.ribbon-main { flex: 1; }
.ribbon-tabs { display: flex; height: 14px; gap: 28px; padding-left: 9px; }
.ribbon-tabs button { padding: 1px 0 0; }
.ribbon-tabs .active { width: 35px; margin-right: -4px; color: #2587b4; border-bottom: 2px solid #3191bd; font-weight: bold; }
.groups { display: flex; }
.group { height: 39px; display: flex; flex-direction: column; align-items: center; justify-content: space-between; padding: 2px 6px 0; border-right: 1px solid #e2e2e2; }
.group:last-child { border-right: 0; }
.six { width: 179px; }
.two { width: 64px; }
.one { width: 52px; }
.tools { align-self: stretch; display: flex; justify-content: space-between; }
.tools.single { justify-content: center; }
.tools svg { width: 23px; height: 23px; display: block; }
.group-name { height: 11px; }

.canvas { position: relative; flex: 1; min-height: 0; display: flex; flex-direction: column; justify-content: space-between; padding: 3px 2px; }
.model { position: absolute; inset: 0; width: 100%; height: 100%; }
.browser, .comments { position: relative; width: 199px; }
.float-head { display: flex; align-items: center; gap: 4px; height: 16px; padding: 0 1px 0 2px; border: 1px solid #d8d8d8; background: #f2f2f2; font-size: 7px; }
.float-head h2 { flex: 1; }
.comments .float-head { padding-left: 16px; }
.grip { width: 1px; height: 7px; background: #777; }
.tree { padding-top: 2px; font-size: 7px; color: #333; }
.tree li { display: flex; align-items: center; gap: 5px; height: 16px; padding-left: 22px; }
.tree .root { padding-left: 10px; }
.node { display: flex; align-items: center; gap: 5px; height: 13px; padding: 0 5px 0 0; background: #f3f3f3; }
.node span { padding-left: 4px; }
.node .root-name { display: flex; align-items: center; gap: 7px; height: 12px; padding: 0 8px 0 1px; background: #888; color: #fff; }
.node .user-dot { width: 9px; height: 9px; margin-left: -2px; padding: 0; border-radius: 50%; background: #25aaa6; color: #fff; line-height: 9px; text-align: center; }
.viewcube { position: absolute; top: 14px; right: 8px; width: 66px; height: 56px; }
.cube-face { font: bold 8px "Open Sans", sans-serif; fill: #7c8287; }
.axis-z { font: bold 9px "Liberation Sans", sans-serif; fill: #6669b5; }
.axis-x { font: bold 9px "Liberation Sans", sans-serif; fill: #df7b84; }
.navbar { position: absolute; left: 42%; bottom: 2px; display: flex; height: 17px; gap: 4px; background: #f1f1f1; }
.navbar button { min-width: 13px; }
.navbar .caret { margin-left: 1px; }
.navbar .on { width: 22px; background: #1d9bc9; }
.navbar .on .caret { border-top-color: #fff; }

.timeline { height: 35px; flex: none; display: flex; align-items: center; padding: 0 8px 2px 6px; background: #f2f2f2; }
.playback { display: flex; gap: 4px; }
.history { position: relative; margin-left: 14px; }
.features { display: flex; gap: 4px; padding-top: 4px; }
.rail { display: block; width: 92px; height: 5px; }
.marker { position: absolute; right: -8px; top: -3px; width: 10px; height: 22px; }

.taskbar { height: 28px; flex: none; display: flex; align-items: center; background: #ededed; font-family: "Open Sans", sans-serif; font-size: 9px; color: #222; }
.start { width: 32px; }
.search { display: flex; align-items: center; width: 192px; height: 27px; padding-left: 7px; border: 1px solid #ddd; background: #fdfdfd; }
.search input { flex: 1; min-width: 0; padding: 0 0 0 6px; border: 0; background: none; outline: 0; }
.search input::placeholder { color: #333; opacity: 1; }
.bird { width: 46px; height: 25px; }
.pinned { display: flex; align-self: stretch; gap: 1px; }
.pinned button { width: 32px; border-bottom: 2px solid transparent; }
.pinned .running { border-bottom-color: #2b93bd; }
.pinned .front { background: #fafafa; }
.tray { margin-left: auto; display: flex; align-items: center; gap: 6px; padding-right: 16px; }
.weather { gap: 4px; margin-right: 4px; }
.clock { display: flex; flex-direction: column; align-items: flex-end; margin: 0 6px 0 -3px; font-family: "Liberation Sans", sans-serif; font-size: 8px; line-height: 12px; }
```
